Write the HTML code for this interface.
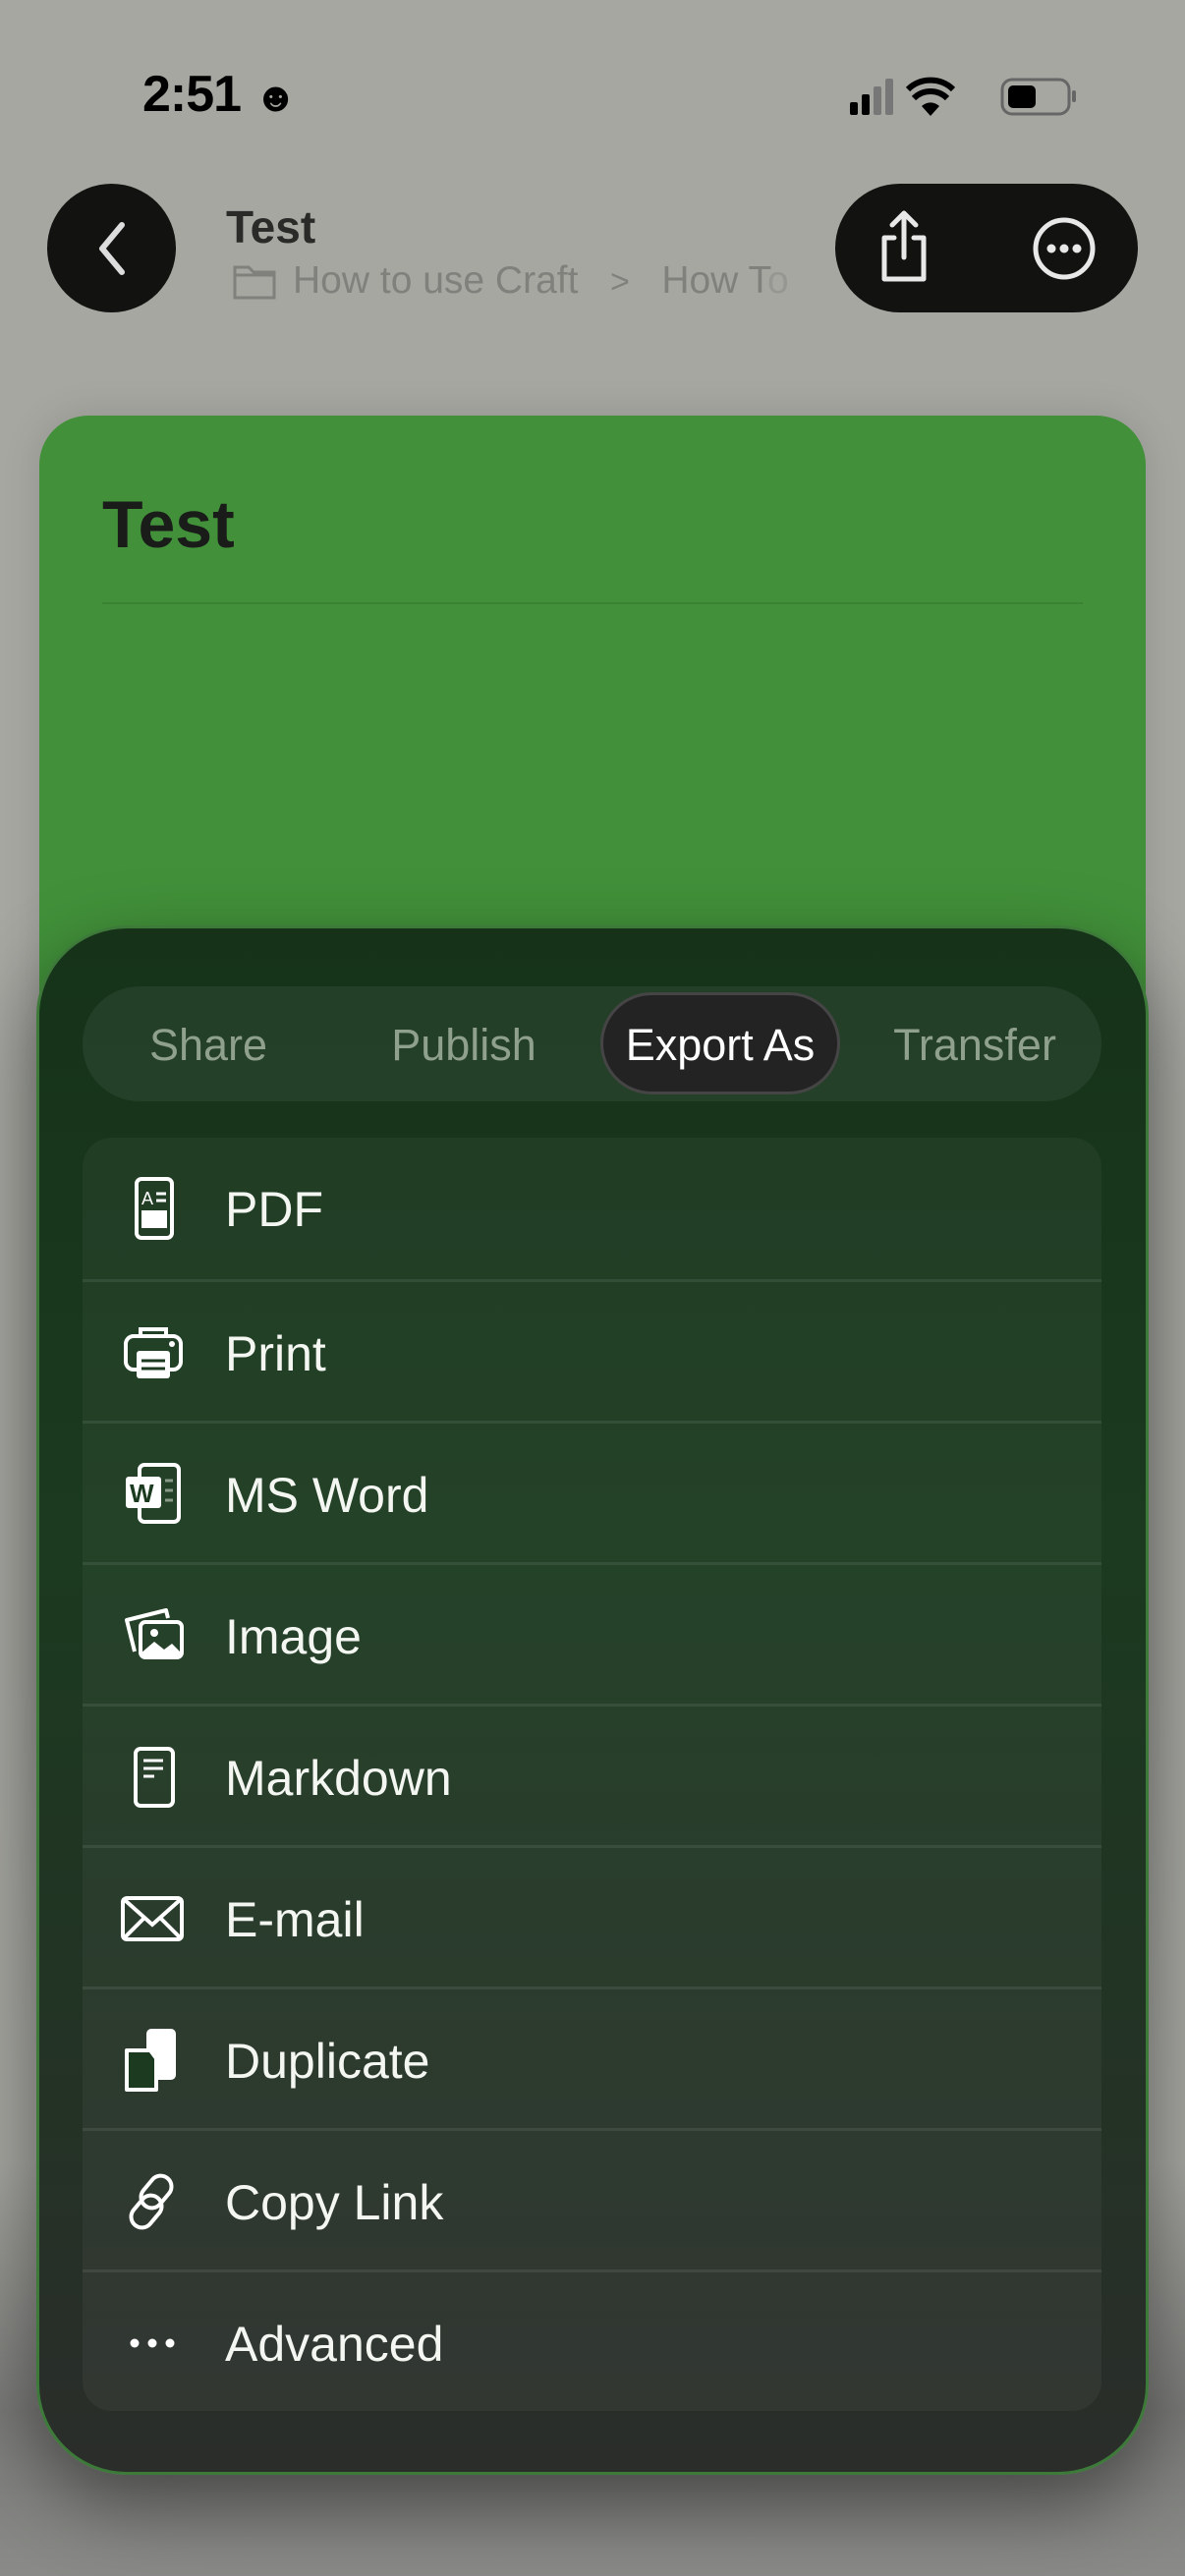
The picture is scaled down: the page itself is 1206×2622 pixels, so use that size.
<!DOCTYPE html>
<html><head><meta charset="utf-8">
<style>
*{margin:0;padding:0;box-sizing:border-box}
body{width:1206px;height:2622px;background:#a6a7a1;font-family:"Liberation Sans",sans-serif;position:relative;overflow:hidden}
.abs{position:absolute}
.time{left:145px;top:66px;font-size:52px;font-weight:700;color:#000;letter-spacing:-1px}
.back{left:48px;top:187px;width:131px;height:131px;border-radius:50%;background:#121210}
.title{left:230px;top:204px;font-size:46px;font-weight:700;color:#2a2a28}
.crumb{left:298px;top:264px;font-size:39px;color:#80817c;white-space:nowrap}
.pill{left:850px;top:187px;width:308px;height:131px;border-radius:66px;background:#121210}
.card{left:40px;top:423px;width:1126px;height:1740px;border-radius:50px;background:#42913a;box-shadow:0 0 40px rgba(0,0,0,.12)}
.card h1{position:absolute;left:64px;top:72px;font-size:68px;font-weight:700;color:#1a1c1a}
.card .div{position:absolute;left:64px;right:64px;top:190px;height:2px;background:#3b8334}
.fade{left:0;top:1700px;width:1206px;height:500px;background:linear-gradient(rgba(166,167,161,0),#a6a7a1 80%)}
.bot{left:0;top:2200px;width:1206px;height:422px;background:linear-gradient(#a6a7a1,#7a7b78 60%,#8a8b88)}
.sheet{left:37px;top:942px;width:1132px;height:1577px;border-radius:92px;background:linear-gradient(#16331a,#1b3a1f 40%,#2a2d2a);border:3px solid #3d7a3a;box-shadow:0 30px 80px rgba(0,0,0,.45)}
.seg{left:84px;top:1004px;width:1037px;height:117px;border-radius:58px;background:rgba(255,255,255,.06)}
.sel{left:611px;top:1010px;width:244px;height:104px;border-radius:52px;background:#232323;border:3px solid #454545}
.tab{top:1038px;font-size:45px;color:#8fa08c;transform:translateX(-50%);white-space:nowrap}
.list{left:84px;top:1158px;width:1037px;height:1296px;border-radius:30px;background:rgba(255,255,255,.045);overflow:hidden}
.row{position:absolute;left:0;width:1037px;height:144px;border-top:3px solid rgba(255,255,255,.08)}
.row:first-child{border-top:none}
.row span{position:absolute;left:145px;top:44px;font-size:50px;color:#f4f6f2}
.row svg{position:absolute;left:35px;top:36px}
</style></head><body>
<div class="abs time">2:51 <span style="font-size:42px;font-weight:400">☻</span></div>
<svg class="abs" style="left:862px;top:78px" width="240" height="42" viewBox="0 0 240 42">
<rect x="3" y="26" width="8" height="13" rx="2" fill="#000"/><rect x="15" y="18" width="8" height="21" rx="2" fill="#000"/>
<rect x="27" y="10" width="8" height="29" rx="2" fill="#777"/><rect x="39" y="2" width="8" height="37" rx="2" fill="#777"/>
<path d="M85 40 L76 30 A13 13 0 0 1 94 30Z" fill="#000"/>
<path d="M68 22 A24 24 0 0 1 102 22" stroke="#000" stroke-width="6" fill="none"/>
<path d="M62 13 A33 33 0 0 1 108 13" stroke="#000" stroke-width="6" fill="none"/>
<rect x="158" y="3" width="68" height="35" rx="10" fill="none" stroke="#666" stroke-width="3"/>
<rect x="164" y="9" width="28" height="23" rx="5" fill="#000"/><rect x="229" y="14" width="4" height="12" rx="2" fill="#666"/>
</svg>
<div class="abs back"><svg width="131" height="131"><path d="M76 42 L56 66 L76 90" stroke="#ddd" stroke-width="6" fill="none" stroke-linecap="round" stroke-linejoin="round"/></svg></div>
<div class="abs title">Test</div>
<svg class="abs" style="left:236px;top:266px" width="46" height="40"><path d="M3 6 h14 l5 5 h21 v26 h-40z M3 14 h40" stroke="#80817c" stroke-width="3" fill="none"/></svg>
<div class="abs crumb">How to use Craft &nbsp;&nbsp;<span style="font-size:34px">&gt;</span>&nbsp;&nbsp; How T<span style="opacity:.4">o</span></div>
<div class="abs pill">
<svg class="abs" style="left:40px;top:25px" width="60" height="80"><path d="M30 5 V50 M18 17 L30 5 L42 17 M20 30 H10 V72 H50 V30 H40" stroke="#e8e8e8" stroke-width="5" fill="none" stroke-linecap="round" stroke-linejoin="round"/></svg>
<svg class="abs" style="left:200px;top:33px" width="66" height="66"><circle cx="33" cy="33" r="29" stroke="#e8e8e8" stroke-width="5" fill="none"/><circle cx="20" cy="33" r="4.5" fill="#e8e8e8"/><circle cx="33" cy="33" r="4.5" fill="#e8e8e8"/><circle cx="46" cy="33" r="4.5" fill="#e8e8e8"/></svg>
</div>
<div class="abs card"><h1>Test</h1><div class="div"></div></div>
<div class="abs fade"></div>
<div class="abs bot"></div>
<div class="abs sheet"></div>
<div class="abs seg"></div>
<div class="abs sel"></div>
<div class="abs tab" style="left:212px">Share</div>
<div class="abs tab" style="left:472px">Publish</div>
<div class="abs tab" style="left:733px;color:#fff">Export As</div>
<div class="abs tab" style="left:992px">Transfer</div>
<div class="abs list">
<div class="row" style="top:0"><svg width="72" height="72"><rect x="20" y="6" width="36" height="60" rx="5" stroke="#fff" stroke-width="4" fill="none"/><text x="25" y="32" font-size="18" fill="#fff" font-family="Liberation Sans">A</text><path d="M40 21h10M40 28h10" stroke="#fff" stroke-width="3"/><rect x="25" y="38" width="26" height="18" fill="#fff"/></svg><span>PDF</span></div>
<div class="row" style="top:144px"><svg width="72" height="72"><path d="M24 18 V12 h26 v6" stroke="#fff" stroke-width="4" fill="none"/><rect x="9" y="19" width="56" height="34" rx="8" stroke="#fff" stroke-width="4" fill="none"/><rect x="20" y="34" width="34" height="28" rx="3" fill="#fff"/><path d="M25 44h24M25 52h24" stroke="#1b3a1f" stroke-width="3"/><circle cx="56" cy="27" r="3" fill="#fff"/></svg><span>Print</span></div>
<div class="row" style="top:288px"><svg width="72" height="72"><rect x="23" y="6" width="40" height="58" rx="5" stroke="#fff" stroke-width="4" fill="none"/><rect x="9" y="18" width="36" height="32" rx="3" fill="#fff"/><text x="13" y="44" font-size="26" font-weight="700" fill="#1b3a1f" font-family="Liberation Sans">W</text><path d="M49 22h8M49 32h8M49 42h8" stroke="#8a9a88" stroke-width="3"/></svg><span>MS Word</span></div>
<div class="row" style="top:432px"><svg width="72" height="72"><path d="M18 52 L10 20 L50 10 L52 18" stroke="#fff" stroke-width="4" fill="none" stroke-linejoin="round"/><rect x="24" y="22" width="42" height="36" rx="5" stroke="#fff" stroke-width="4" fill="none"/><path d="M24 54 L38 42 L48 50 L56 44 L66 54 V58 H24z" fill="#fff"/><circle cx="38" cy="33" r="4" fill="#fff"/></svg><span>Image</span></div>
<div class="row" style="top:576px"><svg width="72" height="72"><rect x="19" y="7" width="38" height="58" rx="5" stroke="#fff" stroke-width="4" fill="none"/><path d="M27 19h20M27 27h20M27 35h11" stroke="#fff" stroke-width="3"/></svg><span>Markdown</span></div>
<div class="row" style="top:720px"><svg width="72" height="72"><rect x="6" y="15" width="60" height="42" rx="4" stroke="#fff" stroke-width="4" fill="none"/><path d="M8 17 L36 42 L64 17 M8 55 L28 35 M64 55 L44 35" stroke="#fff" stroke-width="4" fill="none"/></svg><span>E-mail</span></div>
<div class="row" style="top:864px"><svg width="72" height="72"><rect x="30" y="4" width="30" height="52" rx="5" fill="#fff"/><path d="M10 26 H34 L40 34 V66 H10z" fill="#1b3a1f" stroke="#fff" stroke-width="4" stroke-linejoin="round"/></svg><span>Duplicate</span></div>
<div class="row" style="top:1008px"><svg width="72" height="72"><g fill="none" stroke="#fff" stroke-width="4"><rect x="29" y="8" width="22" height="36" rx="11" transform="rotate(40 40 26)"/><rect x="19" y="28" width="22" height="36" rx="11" transform="rotate(40 30 46)"/></g></svg><span>Copy Link</span></div>
<div class="row" style="top:1152px"><svg width="72" height="72"><circle cx="18" cy="36" r="4.5" fill="#fff"/><circle cx="36" cy="36" r="4.5" fill="#fff"/><circle cx="54" cy="36" r="4.5" fill="#fff"/></svg><span>Advanced</span></div>
</div>
</body></html>
